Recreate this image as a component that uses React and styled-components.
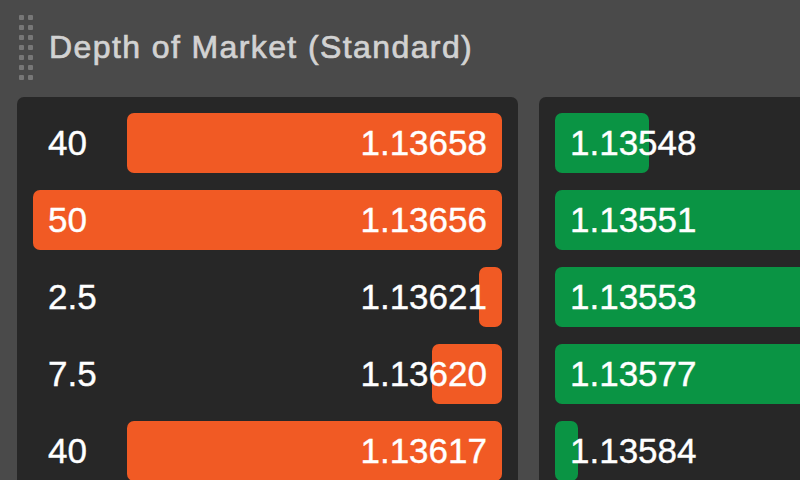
import React from "react";
import styled, { createGlobalStyle } from "styled-components";

const Global = createGlobalStyle`
  html, body { margin: 0; padding: 0; background: #4a4a4a; overflow: hidden; }
  body { font-family: "Liberation Sans", Arial, Helvetica, sans-serif; }
`;

const Page = styled.div`
  width: 800px;
  height: 480px;
  overflow: hidden;
  background: #4a4a4a;
`;

const Header = styled.div`
  display: flex;
  align-items: center;
  height: 97px;
  padding-left: 19px;
  box-sizing: border-box;
  padding-bottom: 2px;
`;

const Grip = styled.div`
  display: grid;
  grid-template-columns: repeat(2, 5px);
  grid-auto-rows: 5px;
  column-gap: 4px;
  row-gap: 5px;
  margin-right: 16px;
`;

const Dot = styled.span`
  background: #777777;
  border-radius: 1px;
`;

const Title = styled.h1`
  margin: 0;
  font-weight: 400;
  font-size: 32px;
  color: #d2d2d2;
  letter-spacing: 1.4px;
  white-space: nowrap;
  -webkit-text-stroke: 0.7px #d2d2d2;
`;

const Panels = styled.div`
  display: grid;
  grid-template-columns: 501px 501px;
  column-gap: 21px;
  padding-left: 17px;
`;

const Panel = styled.div`
  background: #272727;
  border-radius: 7px;
  padding: 16px;
  display: flex;
  flex-direction: column;
  gap: 17px;
  height: 460px;
  box-sizing: border-box;
`;

const Row = styled.div`
  position: relative;
  height: 60px;
  display: flex;
  align-items: center;
  justify-content: space-between;
  padding: 0 15px;
  font-size: 35px;
  color: #ffffff;
`;

const Bar = styled.div`
  position: absolute;
  top: 0;
  bottom: 0;
  ${(p) => (p.$side === "ask" ? "right: 0;" : "left: 0;")}
  background: ${(p) => (p.$side === "ask" ? "#f15a24" : "#0a9444")};
  border-radius: 7px;
`;

const Cell = styled.span`
  position: relative;
  z-index: 1;
  -webkit-text-stroke: 0.4px #ffffff;
`;

const MAX = 50;

const asks = [
  { vol: "40", v: 40, price: "1.13658" },
  { vol: "50", v: 50, price: "1.13656" },
  { vol: "2.5", v: 2.5, price: "1.13621" },
  { vol: "7.5", v: 7.5, price: "1.13620" },
  { vol: "40", v: 40, price: "1.13617" },
];

const bids = [
  { vol: "10", v: 10, price: "1.13548" },
  { vol: "50", v: 50, price: "1.13551" },
  { vol: "50", v: 50, price: "1.13553" },
  { vol: "40", v: 40, price: "1.13577" },
  { vol: "2.5", v: 2.5, price: "1.13584" },
];

export default function App() {
  return (
    <Page>
      <Global />
      <Header>
        <Grip>
          {Array.from({ length: 14 }).map((_, i) => (
            <Dot key={i} />
          ))}
        </Grip>
        <Title>Depth of Market (Standard)</Title>
      </Header>
      <Panels>
        <Panel>
          {asks.map((r, i) => (
            <Row key={i}>
              <Bar $side="ask" style={{ width: `${(r.v / MAX) * 100}%` }} />
              <Cell>{r.vol}</Cell>
              <Cell>{r.price}</Cell>
            </Row>
          ))}
        </Panel>
        <Panel>
          {bids.map((r, i) => (
            <Row key={i}>
              <Bar $side="bid" style={{ width: `${(r.v / MAX) * 100}%` }} />
              <Cell>{r.price}</Cell>
              <Cell>{r.vol}</Cell>
            </Row>
          ))}
        </Panel>
      </Panels>
    </Page>
  );
}
